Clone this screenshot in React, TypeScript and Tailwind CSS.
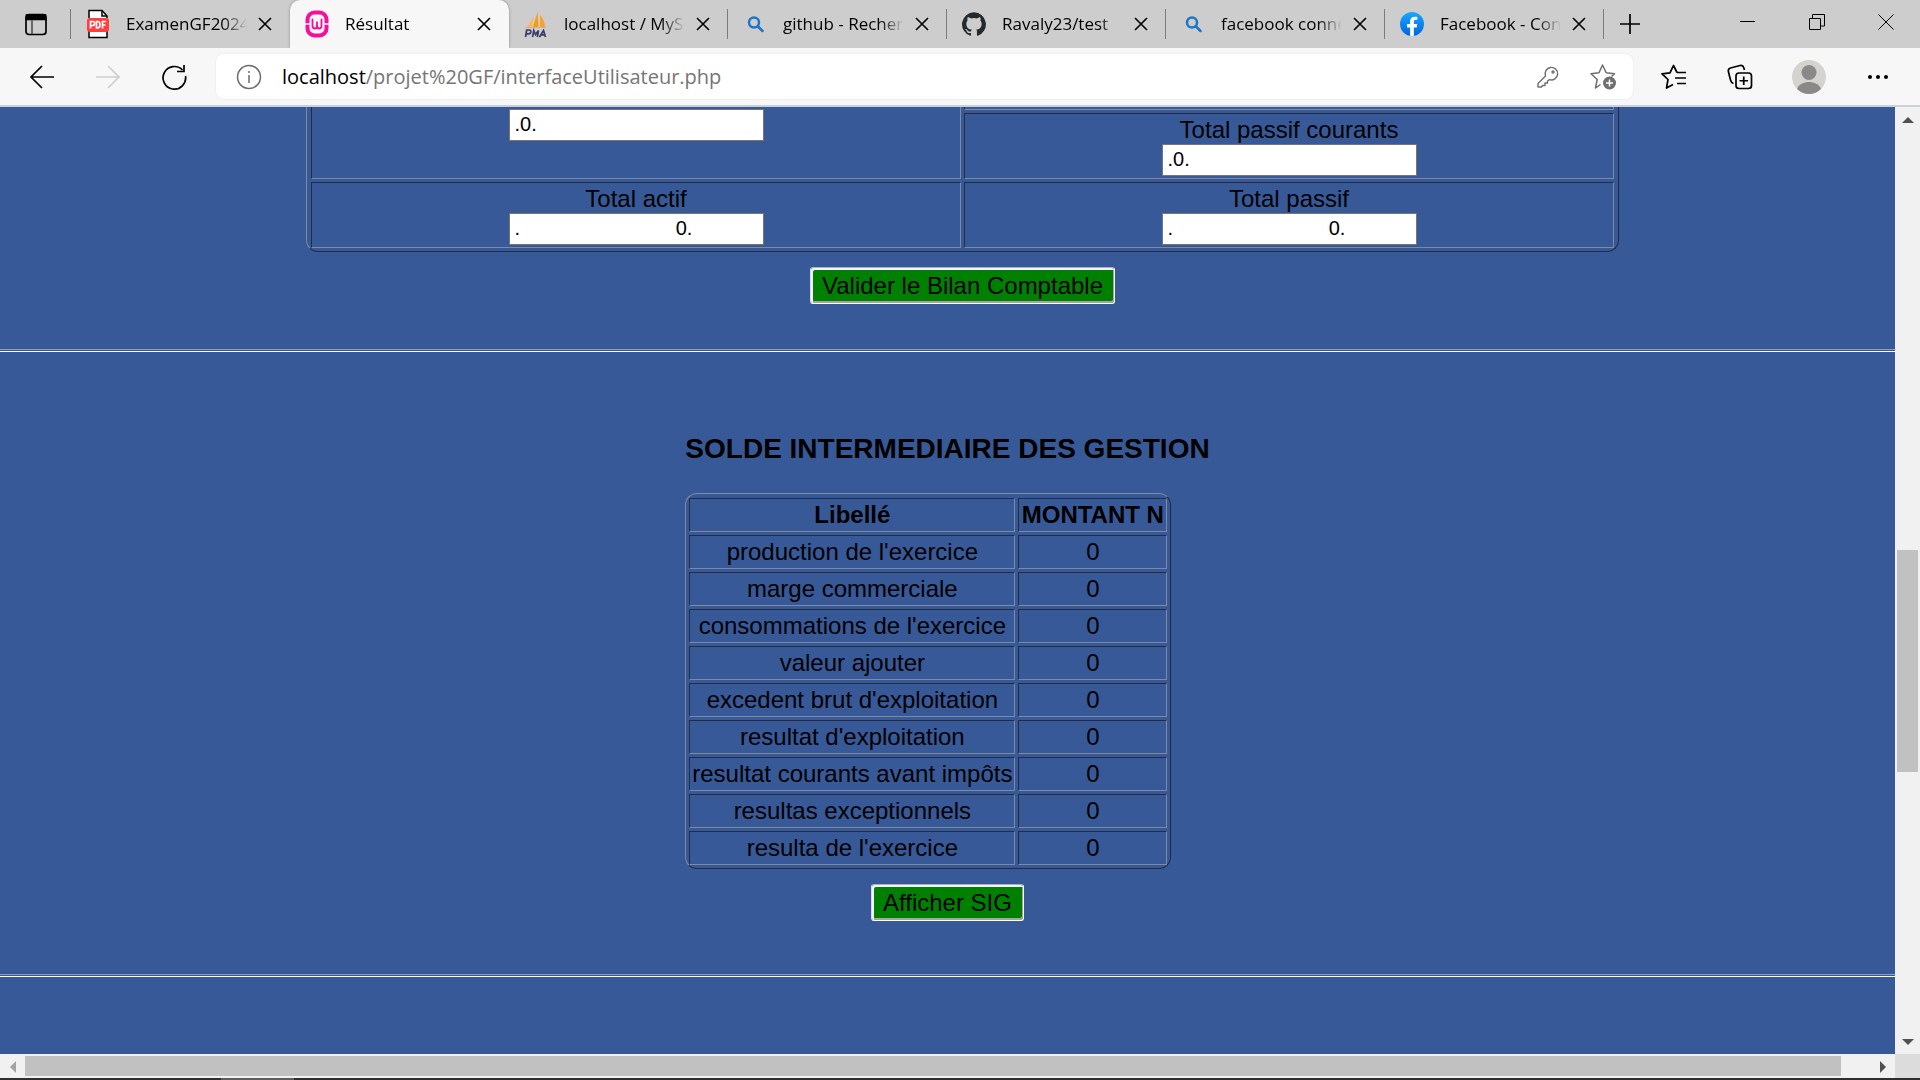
import React from 'react';

type TabData = { title: string; icon: React.ReactNode; active?: boolean; separator?: boolean };

function PdfIcon() {
  return (
    <svg width="22" height="30" viewBox="0 0 22 30" fill="none">
      <path d="M2 9V1.5h13l5 5.500V9M2 21v7.500h18V21" fill="#fff" stroke="#000" strokeWidth="1.500" />
      <path d="M15 1.500V7h5" stroke="#000" strokeWidth="1.500" />
      <rect y="9" width="22" height="14" rx="3" fill="#ff3e3e" />
      <g stroke="#fff" strokeWidth="1.700">
        <path d="M3.500 19.500v-7h2.200a1.500 1.500 0 0 1 0 4H3.500" />
        <path d="M9.500 12.500h1.200c3 0 3 6.500 0 6.500H9.500z" />
        <path d="M15.500 19.500v-7h3.700M15.500 16h3" />
      </g>
    </svg>
  );
}

function WampIcon() {
  return (
    <svg width="24" height="28" viewBox="0 0 24 28" fill="none">
      <rect x="2.500" y="2.500" width="19" height="23" rx="7" stroke="#f60f9b" strokeWidth="4" />
      <path d="M0 14h6M18 14h6" stroke="#f7f7f7" strokeWidth="1.500" />
      <path d="M7.500 9.500v6c0 4 4.500 4 4.500 0v-4v4c0 4 4.500 4 4.500 0v-6" stroke="#f60f9b" strokeWidth="1.800" strokeLinecap="round" />
    </svg>
  );
}

function PmaIcon() {
  return (
    <svg width="24" height="28" viewBox="0 0 24 28" fill="none">
      <path d="M9 17 13.500 2l1 15z" fill="#f89c0e" />
      <path d="M3 17 9.500 7l-1.500 10z" fill="#fbb657" />
      <path d="M16 5c3 3 5 8 5 12h-5z" fill="#f6a12c" />
      <path d="M1 17.500h21" stroke="#d3b48a" />
      <g stroke="#39396b" strokeWidth="1.700">
        <path d="m1.500 27 1.200-7h2.500c2.500 0 2 3.800-.5 3.800H2.200" />
        <path d="m8.500 27 1.300-6.500 1.700 4 3-4-1.200 6.500" />
        <path d="m15.500 27 4-6.500 2 6.500M17.500 24.800h3.500" />
      </g>
    </svg>
  );
}

function SearchIcon() {
  return (
    <svg width="24" height="24" viewBox="0 0 24 24" fill="none" stroke="#1d75c9" strokeWidth="2.500" strokeLinecap="round">
      <circle cx="11" cy="10.500" r="5" />
      <path d="m15 14.500 4.500 4.500" />
    </svg>
  );
}

function GithubIcon() {
  return (
    <svg width="24" height="24" viewBox="0 0 24 24" fill="#24292e">
      <path d="M12 .3a12 12 0 0 0-3.800 23.380c.6.120.83-.26.83-.57L9 21.070c-3.340.72-4.040-1.610-4.040-1.610-.55-1.390-1.340-1.760-1.340-1.760-1.080-.74.09-.73.09-.73 1.200.09 1.840 1.240 1.840 1.240 1.070 1.830 2.810 1.300 3.500 1 .1-.78.420-1.310.760-1.610-2.670-.3-5.470-1.330-5.470-5.930 0-1.310.470-2.380 1.240-3.220-.14-.3-.54-1.520.1-3.180 0 0 1-.32 3.300 1.230a11.500 11.500 0 0 1 6 0c2.280-1.550 3.290-1.230 3.290-1.230.64 1.660.24 2.880.12 3.180a4.650 4.650 0 0 1 1.230 3.220c0 4.610-2.800 5.630-5.480 5.920.42.360.81 1.100.81 2.220l-.01 3.290c0 .310.2.690.82.570A12 12 0 0 0 12 .3" />
    </svg>
  );
}

function FacebookIcon() {
  return (
    <svg width="24" height="24" viewBox="0 0 24 24">
      <defs>
        <linearGradient id="fb" x1="0" y1="0" x2="0" y2="1">
          <stop offset="0" stopColor="#17a9fd" />
          <stop offset="1" stopColor="#0165e1" />
        </linearGradient>
      </defs>
      <circle cx="12" cy="12" r="12" fill="url(#fb)" />
      <path d="m16.670 15.470.53-3.470h-3.330V9.750c0-.95.470-1.880 1.960-1.880h1.510V4.920S15.970 4.690 14.660 4.690c-2.740 0-4.530 1.660-4.530 4.670V12H7.080v3.470h3.050v8.390a12.100 12.100 0 0 0 3.740 0v-8.390z" fill="#fff" />
    </svg>
  );
}

const tabs: TabData[] = [
  { title: 'ExamenGF2024', icon: <PdfIcon /> },
  { title: 'Résultat', icon: <WampIcon />, active: true },
  { title: 'localhost / MyS', icon: <PmaIcon />, separator: true },
  { title: 'github - Recher', icon: <SearchIcon />, separator: true },
  { title: 'Ravaly23/test', icon: <GithubIcon />, separator: true },
  { title: 'facebook conne', icon: <SearchIcon />, separator: true },
  { title: 'Facebook - Con', icon: <FacebookIcon />, separator: true },
];

function Tab({ title, icon, active, separator }: TabData) {
  return (
    <div className={`relative flex h-12 w-[219px] min-w-0 shrink items-center pl-[15px] ${active ? 'rounded-t-[10px] bg-[#f7f7f7] shadow-[0_0_3px_#00000055] [clip-path:inset(-3px_-3px_0_-3px)]' : ''}`}>
      <span className="flex w-6 shrink-0 justify-center">{icon}</span>
      <span className="ml-4 w-[121px] overflow-hidden text-[17px] whitespace-nowrap [mask-image:linear-gradient(to_right,#000_80%,transparent)]">{title}</span>
      <button aria-label={`Fermer ${title}`} className="ml-[11px] shrink-0">
        <svg width="14" height="14" viewBox="0 0 14 14" stroke="#000" strokeWidth="1.600">
          <path d="m1 1 12 12M13 1 1 13" />
        </svg>
      </button>
      {separator && <span className="absolute right-0 h-[30px] w-px bg-[#7c7c7c]" />}
    </div>
  );
}

function TabBar() {
  return (
    <header className="flex h-12 shrink-0 items-center bg-[#cdcdcd]">
      <button aria-label="Menu des onglets" className="ml-[25px]">
        <svg width="22" height="23" viewBox="0 0 22 23" fill="none" stroke="#000" strokeWidth="1.700">
          <rect x="1" y="1.500" width="20" height="20" rx="3" />
          <path d="M1.500 2h19v4.500h-19z" fill="#000" />
          <path d="M7 7v14" stroke="#555" />
        </svg>
      </button>
      <span className="ml-[23px] h-[30px] w-px bg-[#7c7c7c]" />
      <nav className="flex min-w-0">
        {tabs.map((t) => <Tab key={t.title} {...t} />)}
      </nav>
      <button aria-label="Nouvel onglet" className="ml-[15px]">
        <svg width="22" height="22" viewBox="0 0 22 22" stroke="#000" strokeWidth="1.700"><path d="M11 1v20M1 11h20" /></svg>
      </button>
      <div className="mr-[26px] mb-1 ml-auto flex items-center gap-[53px]">
        <button aria-label="Réduire">
          <svg width="16" height="16" viewBox="0 0 16 16" stroke="#000"><path d="M0 7.500h15" /></svg>
        </button>
        <button aria-label="Restaurer">
          <svg width="16" height="16" viewBox="0 0 16 16" fill="none" stroke="#000"><path d="M.5 4.500h11v11H.5zM3.500 4V.5h12v11.500H12" /></svg>
        </button>
        <button aria-label="Fermer">
          <svg width="16" height="16" viewBox="0 0 16 16" stroke="#000"><path d="m.5.5 15 15M15.500.5l-15 15" /></svg>
        </button>
      </div>
    </header>
  );
}

function Toolbar() {
  return (
    <div className="flex h-[57px] shrink-0 items-center bg-[#f7f7f7] pr-7 pl-[29px]">
      <button aria-label="Précédent">
        <svg width="26" height="26" viewBox="0 0 26 26" fill="none" stroke="#000" strokeWidth="1.700"><path d="M25 13H2M13 2 2 13l11 11" /></svg>
      </button>
      <button aria-label="Suivant" className="ml-10">
        <svg width="26" height="26" viewBox="0 0 26 26" fill="none" stroke="#cfcfcf" strokeWidth="1.700"><path d="M1 13h23M13 2l11 11-11 11" /></svg>
      </button>
      <button aria-label="Actualiser" className="ml-10">
        <svg width="26" height="26" viewBox="0 0 26 26" fill="none" stroke="#000" strokeWidth="1.700"><path d="M21.500 6A11.300 11.300 0 1 0 24.500 12M23 1v6.500h-7" /></svg>
      </button>
      <div className="ml-[29px] flex h-[45px] grow items-center rounded-lg bg-white pr-[17px] pl-5 shadow-[0_0_2px_#0000001a]">
        <svg width="26" height="26" viewBox="0 0 26 26" fill="none" stroke="#6b6b6b" strokeWidth="1.500">
          <circle cx="13" cy="13" r="11.500" />
          <path d="M13 11v8M13 7v2" />
        </svg>
        <div className="ml-5 grow text-[20px] whitespace-nowrap text-[#757575]"><span className="text-black">localhost</span>/projet%20GF/interfaceUtilisateur.php</div>
        <button aria-label="Mots de passe">
          <svg width="22" height="22" viewBox="0 0 22 22" fill="none" stroke="#6f6f6f" strokeWidth="1.400" strokeLinejoin="round">
            <path d="M8.500 10A6.300 6.300 0 1 1 12.500 13.700L10.500 15v2H8v2.500H5.500L4.500 21H1v-3.500z" />
            <circle cx="16" cy="6" r="1" />
          </svg>
        </button>
        <button aria-label="Ajouter aux favoris" className="ml-[31px]">
          <svg width="26" height="26" viewBox="0 0 26 26" fill="none" stroke="#6f6f6f" strokeWidth="1.500" strokeLinejoin="round">
            <path d="M10.500 20.500 5.500 24l1.700-8.500L1 9.800l8-1L12.500 1l3.700 7.800 8.300 1-3 2.700" />
            <circle cx="19.500" cy="19" r="6.500" fill="#6f6f6f" stroke="none" />
            <path d="M19.500 15.500v7M16 19h7" stroke="#fff" />
          </svg>
        </button>
      </div>
      <button aria-label="Favoris" className="ml-[28px]">
        <svg width="26" height="26" viewBox="0 0 26 26" fill="none" stroke="#000" strokeWidth="1.700" strokeLinejoin="round">
          <path d="M12 20.500 5.500 24l1.500-8.500L1 9.800l8-1L12.500 1.500 16 8.500M16 8.500h9M14 14h11M16 19.500h9" />
        </svg>
      </button>
      <button aria-label="Collections" className="ml-10">
        <svg width="26" height="26" viewBox="0 0 26 26" fill="none" stroke="#000" strokeWidth="1.700">
          <rect x="9" y="9" width="15.500" height="15.500" rx="3" />
          <path d="M16.750 12.500v8.500M12.500 16.750h8.500M6.500 19.500c-2-.5-2.500-1.500-3-3.500L1.500 8C1 6 1.500 4.500 3.500 4L13 1.500c2-.5 3.200.3 3.700 2L17.500 6" />
        </svg>
      </button>
      <button aria-label="Profil" className="ml-[39px]">
        <svg width="34" height="34" viewBox="0 0 34 34">
          <circle cx="17" cy="17" r="17" fill="#d5d3d0" />
          <circle cx="17" cy="12.500" r="7.500" fill="#8b8987" />
          <path d="M5 29C8 19.500 26 19.500 29 29a17 17 0 0 1-24 0" fill="#8b8987" />
        </svg>
      </button>
      <button aria-label="Paramètres" className="ml-auto pl-[38px]">
        <svg width="28" height="6" viewBox="0 0 28 6"><circle cx="6" cy="3" r="2" /><circle cx="14" cy="3" r="2" /><circle cx="22" cy="3" r="2" /></svg>
      </button>
    </div>
  );
}

const cell = 'border border-t-[#202d42] border-l-[#202d42] border-r-[#7f8aa0] border-b-[#7f8aa0] text-center align-top';
const frame = 'border-separate border-spacing-[3px] border border-t-[#7f8aa0] border-l-[#7f8aa0] border-r-[#202d42] border-b-[#202d42]';

function Field({ id, label, value, hideLabel }: { id: string; label: string; value: string; hideLabel?: boolean }) {
  return (
    <div className="flex flex-col items-center">
      {!hideLabel && <label htmlFor={id}>{label}</label>}
      <input id={id} aria-label={label} defaultValue={value} className="h-8 w-[255px] border border-[#767676] bg-white px-[5px] pb-[2px] text-[20px]" />
    </div>
  );
}

function GreenButton({ children }: { children: React.ReactNode }) {
  return (
    <button className="mt-[15px] h-[37px] rounded-[3px] border border-t-[#a9b1c4] border-r-white border-b-white border-l-[#d5dae6] bg-[#008000] px-[11px] leading-[33px] shadow-[inset_2px_2px_0_#f4f4f4,inset_-1px_-2px_0_#a5a5a5]">
      {children}
    </button>
  );
}

function Rule() {
  return <hr className="h-[3px] w-full shrink-0 border-t border-b border-t-[#8f9cbc] border-b-white" />;
}

const rows = [
  "production de l'exercice",
  'marge commerciale',
  "consommations de l'exercice",
  'valeur ajouter',
  "excedent brut d'exploitation",
  "resultat d'exploitation",
  'resultat courants avant impôts',
  'resultas exceptionnels',
  "resulta de l'exercice",
];

const total = '.' + ' '.repeat(28) + '0.';

function Page() {
  return (
    <main className="min-w-0 grow overflow-hidden bg-[#375997] font-['Liberation_Sans',Arial,sans-serif] text-[24px] leading-7 text-black">
      <section className="ml-[30px] flex flex-col items-center">
        <table className={`${frame} -mt-[3px] rounded-b-xl border-t-0 px-px`}>
          <tbody>
            <tr>
              <td rowSpan={2} className={`${cell} w-[650px] border-t-0 pt-[2px]`}>
                <Field id="actif-courants" label="Total actif courants" value=".0." hideLabel />
              </td>
              <td className={`${cell} h-[3px] w-[650px] border-t-0 p-0`} />
            </tr>
            <tr>
              <td className={`${cell} py-[2px]`}><Field id="passif-courants" label="Total passif courants" value=".0." /></td>
            </tr>
            <tr>
              <td className={`${cell} py-[2px]`}><Field id="actif" label="Total actif" value={total} /></td>
              <td className={`${cell} py-[2px]`}><Field id="passif" label="Total passif" value={total} /></td>
            </tr>
          </tbody>
        </table>
        <GreenButton>Valider le Bilan Comptable</GreenButton>
      </section>
      <div className="mt-[45px]"><Rule /></div>
      <section className="mt-[81px] flex flex-col items-center">
        <div className="flex flex-col">
          <h3 className="mb-7 text-[28px] leading-8 font-bold">SOLDE INTERMEDIAIRE DES GESTION</h3>
          <table className={`${frame} self-start rounded-xl pt-px`}>
            <thead>
              <tr>
                <th className={`${cell} w-[326px] py-[2px] font-bold`}>Libellé</th>
                <th className={`${cell} w-[149px] py-[2px] font-bold`}>MONTANT N</th>
              </tr>
            </thead>
            <tbody>
              {rows.map((r) => (
                <tr key={r}>
                  <td className={`${cell} py-[2px]`}>{r}</td>
                  <td className={`${cell} py-[2px]`}>0</td>
                </tr>
              ))}
            </tbody>
          </table>
        </div>
        <GreenButton>Afficher SIG</GreenButton>
      </section>
      <div className="mt-[53px]"><Rule /></div>
    </main>
  );
}

function Arrow({ d, color }: { d: string; color: string }) {
  return (
    <span className="flex size-[25px] shrink-0 items-center justify-center">
      <svg width="12" height="12" viewBox="0 0 12 12" fill={color}><path d={d} /></svg>
    </span>
  );
}

export default function App() {
  return (
    <div className="flex h-screen flex-col overflow-hidden bg-[#efefef] font-['Open_Sans','Noto_Sans',sans-serif] text-black">
      <TabBar />
      <Toolbar />
      <div className="h-[2px] shrink-0 bg-[#c9d0dc]" />
      <div className="flex min-h-0 grow">
        <Page />
        <div className="flex w-[25px] shrink-0 flex-col bg-[#f1f1f1]">
          <Arrow d="M0 9 6 3l6 6z" color="#505050" />
          <div className="grow-[418]" />
          <div className="mx-[2px] grow-[222] bg-[#c1c1c1]" />
          <div className="grow-[257]" />
          <Arrow d="M0 3h12L6 9z" color="#505050" />
        </div>
      </div>
      <div className="flex h-6 shrink-0 bg-[#f1f1f1]">
        <Arrow d="M9 0v12L3 6z" color="#a3a3a3" />
        <div className="my-[2px] grow-[1816] bg-[#c1c1c1]" />
        <div className="grow-[29]" />
        <Arrow d="M3 0v12l6-6z" color="#505050" />
        <div className="w-[25px] shrink-0 bg-[#dcdcdc]" />
      </div>
      <div className="flex h-[2px] shrink-0 bg-[#2e302e]">
        <div className="ml-[221px] w-[73px] bg-[#5c5e5c]" />
      </div>
    </div>
  );
}
